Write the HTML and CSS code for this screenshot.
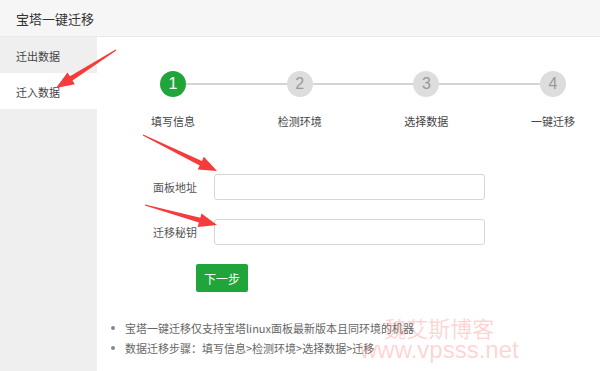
FILE: index.html
```html
<!DOCTYPE html>
<html lang="zh-CN">
<head>
    <meta charset="UTF-8">
    <meta name="viewport" content="width=device-width, initial-scale=1.0">
    <title>宝塔一键迁移</title>
    <link rel="stylesheet" href="styles.css">
</head>
<body>
    <div class="header">宝塔一键迁移</div>
    <div class="layout">
        <ul class="side-menu">
            <li>迁出数据</li>
            <li class="active">迁入数据</li>
        </ul>
        <div class="main">
            <div class="steps">
                <div class="step done">
                    <span class="step-num">1</span>
                    <span class="step-label">填写信息</span>
                </div>
                <div class="step-line"></div>
                <div class="step">
                    <span class="step-num">2</span>
                    <span class="step-label">检测环境</span>
                </div>
                <div class="step-line"></div>
                <div class="step">
                    <span class="step-num">3</span>
                    <span class="step-label">选择数据</span>
                </div>
                <div class="step-line"></div>
                <div class="step">
                    <span class="step-num">4</span>
                    <span class="step-label">一键迁移</span>
                </div>
            </div>

            <form class="migrate-form">
                <div class="form-row">
                    <label class="form-label" for="panelUrl">面板地址</label>
                    <input class="form-input" id="panelUrl" type="text">
                </div>
                <div class="form-row">
                    <label class="form-label" for="panelKey">迁移秘钥</label>
                    <input class="form-input" id="panelKey" type="text">
                </div>
                <button class="btn-next" type="button">下一步</button>
            </form>

            <ul class="tips">
                <li>宝塔一键迁移仅支持宝塔linux面板最新版本且同环境的机器</li>
                <li>数据迁移步骤：填写信息&gt;检测环境&gt;选择数据&gt;迁移</li>
            </ul>
        </div>
    </div>

    <!-- annotation arrows drawn over the screenshot -->
    <svg class="arrows" width="600" height="371" viewBox="0 0 600 371">
        <polygon points="116.3,50.4 72.5,80.5 74.9,84.3 56,88 67.5,72.5 69.9,76.3 115.7,49.6"/>
        <polygon points="143.2,134.6 201.9,160.9 203.9,156.8 217,171 197.7,169.4 199.7,165.4 142.8,135.4"/>
        <polygon points="145.1,204.5 200.3,217.8 201.5,213.5 217,225 197.7,227 198.9,222.6 144.9,205.5"/>
    </svg>

    <div class="watermark">
        <span class="wm-name">魏艾斯博客</span>
        <span class="wm-url">www.vpsss.net</span>
    </div>
</body>
</html>
```

FILE: styles.css
```css
body {
    margin: 0;
    width: 600px;
    height: 371px;
    overflow: hidden;
    font-family: "Microsoft YaHei", "Noto Sans CJK SC", sans-serif;
    color: #333;
    background: #fff;
    position: relative;
}

.header {
    height: 36px;
    line-height: 38px;
    padding-left: 16px;
    font-size: 13px;
    background-color: #f6f6f6;
    border-bottom: 1px solid #e8e8e8;
}

.layout {
    display: flex;
    height: 334px;
}

.side-menu {
    width: 97px;
    margin: 0;
    padding: 0;
    list-style: none;
    background-color: #efefef;
}

.side-menu li {
    height: 36px;
    line-height: 38px;
    padding-left: 16px;
    font-size: 11px;
    color: #444;
}

.side-menu li.active {
    background-color: #fff;
}

.main {
    flex: 1;
    background: #fff;
}

.steps {
    display: flex;
    align-items: flex-start;
    width: 406px;
    margin: 34px 0 0 63px;
}

.step {
    width: 26px;
    display: flex;
    flex-direction: column;
    align-items: center;
}

.step-num {
    width: 26px;
    height: 26px;
    line-height: 26px;
    border-radius: 50%;
    text-align: center;
    font-family: "Liberation Sans", Arial, sans-serif;
    font-size: 16px;
    color: #999;
    background-color: #ddd;
}

.step.done .step-num {
    color: #fff;
    background-color: #20a53a;
}

.step-label {
    width: 70px;
    flex-shrink: 0;
    margin-top: 16px;
    text-align: center;
    font-size: 11px;
    line-height: 16px;
    color: #444;
    white-space: nowrap;
}

.step-line {
    flex: 1;
    height: 2px;
    margin-top: 12px;
    background-color: #d4d4d4;
}

.migrate-form {
    margin: 45px 0 0 56px;
}

.form-row {
    display: flex;
    align-items: center;
    margin-bottom: 19px;
}

.form-label {
    width: 44px;
    font-size: 11px;
    color: #555;
    text-align: right;
}

.form-input {
    width: 271px;
    height: 26px;
    margin-left: 17px;
    padding: 0 8px;
    box-sizing: border-box;
    border: 1px solid #d6d6d6;
    border-radius: 3px;
    outline: none;
}

.btn-next {
    width: 52px;
    height: 28px;
    margin-left: 43px;
    padding: 0;
    border: none;
    border-radius: 2px;
    font-family: inherit;
    font-size: 12px;
    color: #fff;
    background-color: #20a53a;
}

.tips {
    margin: 26px 0 0 29px;
    padding: 0;
    list-style: none;
    font-size: 11px;
    color: #666;
}

.tips li {
    display: flex;
    align-items: center;
    height: 20px;
}

.tips li::before {
    content: "";
    width: 4px;
    height: 4px;
    margin: 0 10px 0 -15px;
    border-radius: 50%;
    background-color: #888;
}

.arrows {
    position: absolute;
    left: 0;
    top: 0;
    pointer-events: none;
}

.arrows polygon {
    fill: #f53b3b;
}

.watermark {
    position: absolute;
    left: 360px;
    top: 316px;
    display: flex;
    flex-direction: column;
    align-items: center;
    color: rgba(255, 80, 80, 0.25);
    line-height: 1;
    pointer-events: none;
}

.wm-name {
    font-size: 22px;
}

.wm-url {
    font-family: "Liberation Sans", Arial, sans-serif;
    font-size: 24px;
}
```
